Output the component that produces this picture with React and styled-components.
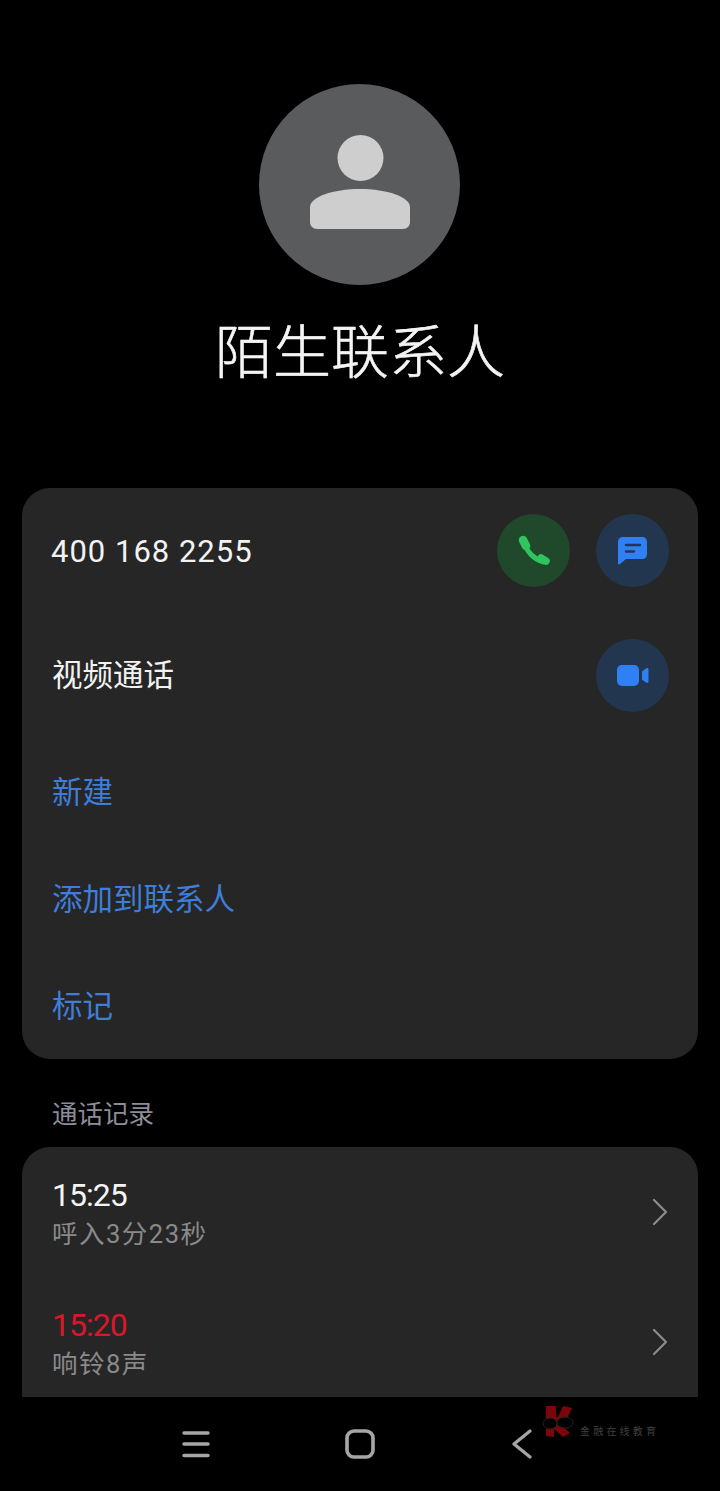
import React from 'react';
import styled, { createGlobalStyle } from 'styled-components';

const GlobalStyle = createGlobalStyle`
    html, body {
        margin: 0;
        padding: 0;
        background: #000;
    }
    body {
        font-family: "Noto Sans CJK SC", Roboto, sans-serif;
    }
`

const Screen = styled.div`
    width: 720px;
    height: 1491px;
    display: flex;
    flex-direction: column;
    background: #000;
    overflow: hidden;
    position: relative;
`

const Content = styled.main`
    flex: 1;
    min-height: 0;
    overflow: hidden;
    padding: 84px 22px 0;
`

const Header = styled.header`
    display: flex;
    flex-direction: column;
    align-items: center;
`

const Avatar = styled.div`
    width: 201px;
    height: 201px;
    margin-left: -1px;
    padding-bottom: 5px;
    box-sizing: border-box;
    border-radius: 50%;
    background: #5a5b5d;
    display: flex;
    align-items: center;
    justify-content: center;
`

const Name = styled.h1`
    margin: 18px 0 0;
    font-size: 58px;
    line-height: 90px;
    font-weight: 300;
    -webkit-text-stroke: 0.6px #f4f4f4;
    color: #f4f4f4;
`

const Card = styled.section`
    background: #262626;
    border-radius: 28px;
    margin-top: ${props => props.$top}px;
    padding-bottom: ${props => props.$bottom || 0}px;
`

const ActionRow = styled.div`
    height: 125px;
    padding: 0 29px 0 30px;
    display: flex;
    align-items: center;
    justify-content: space-between;
`

const PhoneNumber = styled.span`
    margin-left: -1px;
    padding-top: 2px;
    font-family: Roboto, sans-serif;
    font-size: 31px;
    letter-spacing: 1px;
    color: #f2f2f2;
`

const VideoLabel = styled.span`
    padding-bottom: 6px;
    font-size: 30.5px;
    color: #f2f2f2;
`

const RoundButtons = styled.div`
    display: flex;
    gap: 26px;
`

const RoundButton = styled.button`
    width: 73px;
    height: 73px;
    padding: 0;
    border: none;
    border-radius: 50%;
    background: ${props => props.$green ? '#20482b' : '#233650'};
    display: flex;
    align-items: center;
    justify-content: center;
`

const LinkRow = styled.div`
    height: 107px;
    padding: 0 30px 4px;
    box-sizing: border-box;
    display: flex;
    align-items: center;
    font-size: 30.5px;
    color: #3f7ed8;
`

const SectionTitle = styled.h2`
    margin: 35px 0 0 30px;
    font-size: 25.5px;
    line-height: 36px;
    font-weight: 400;
    color: #8b8d98;
`

const CallRow = styled.div`
    height: 130px;
    padding: 0 30px;
    display: flex;
    align-items: center;
    justify-content: space-between;
`

const CallInfo = styled.div`
    padding-top: 3px;
    display: flex;
    flex-direction: column;
`

const CallTime = styled.span`
    font-family: Roboto, sans-serif;
    font-size: 32px;
    line-height: 40px;
    letter-spacing: -1px;
    color: ${props => props.$missed ? '#d8182a' : '#f4f4f4'};
`

const CallDetail = styled.span`
    margin-top: 1px;
    font-family: Roboto, "Noto Sans CJK SC", sans-serif;
    font-size: 25.5px;
    line-height: 36px;
    letter-spacing: 1.5px;
    color: #8a8a8a;
`

const NavBar = styled.nav`
    height: 94px;
    flex: none;
    display: flex;
    align-items: center;
    gap: 135px;
    padding-left: 182px;
    background: #000;
`

const BackSlot = styled.span`
    display: flex;
    margin-left: 2px;
`

const Watermark = styled.div`
    position: absolute;
    left: 540px;
    top: 1403px;
    display: flex;
    align-items: flex-end;
    gap: 4px;
`

const WatermarkText = styled.span`
    font-size: 10px;
    line-height: 14px;
    letter-spacing: 3.2px;
    color: #404040;
    margin-bottom: 1px;
    white-space: nowrap;
`

const PersonIcon = () => (
    <svg width="100" height="94" viewBox="0 0 100 94" fill="#cecece">
        <circle cx="50.500" cy="23" r="23" />
        <path d="M0 72C0 62 23 54 50 54s50 8 50 18v15c0 4-3 7-7 7H7c-4 0-7-3-7-7z" />
    </svg>
)

const PhoneIcon = () => (
    <svg width="34" height="34" viewBox="0 0 34 34" fill="none" stroke="#2fc45d" strokeLinecap="round">
        <path d="M6 6l3 6" strokeWidth="8.500" />
        <path d="M8 10C10 18 17 25 26 28" strokeWidth="5" />
        <path d="M24 24l5 3" strokeWidth="7.500" />
    </svg>
)

const MessageIcon = () => (
    <svg width="30" height="30" viewBox="0 0 30 30">
        <path d="M5 1h19c3 0 5 2 5 5v12c0 3-2 5-5 5H8l-6 5c-1 .8-2 .4-2-1V6c0-3 2-5 5-5z" fill="#2f7ff5" />
        <path d="M8 9h14M8 15.500h8" stroke="#233650" strokeWidth="2.400" strokeLinecap="round" />
    </svg>
)

const VideoIcon = () => (
    <svg width="32" height="22" viewBox="0 0 32 22" fill="#2f7ff5">
        <rect x="0" y="0" width="22" height="21" rx="5" />
        <path d="M25 6.500l4-3c1-.8 2.500-.3 2.500 1v12c0 1.300-1.500 1.800-2.500 1l-4-3z" />
    </svg>
)

const Chevron = () => (
    <svg width="16" height="28" viewBox="0 0 16 28" fill="none" stroke="#8c8c8c" strokeWidth="2.200" strokeLinecap="round" strokeLinejoin="round">
        <path d="M2 2l12 12L2 26" />
    </svg>
)

const MenuGlyph = () => (
    <svg width="28" height="28" viewBox="0 0 28 28" stroke="#a6a6a6" strokeWidth="3.400" strokeLinecap="round">
        <path d="M2 3h24M2 14h24M2 25.500h24" />
    </svg>
)

const HomeGlyph = () => (
    <svg width="30" height="30" viewBox="0 0 30 30" fill="none" stroke="#a6a6a6" strokeWidth="3.600">
        <rect x="2" y="2" width="26" height="26" rx="7" />
    </svg>
)

const BackGlyph = () => (
    <svg width="20" height="30" viewBox="0 0 20 30" fill="none" stroke="#a6a6a6" strokeWidth="3.200" strokeLinecap="round" strokeLinejoin="round">
        <path d="M18 2L2 15l16 13" />
    </svg>
)

const WatermarkLogo = () => (
    <svg width="36" height="36" viewBox="0 0 36 36">
        <path d="M6 3h10v11h2l5-11 9 2-6 13-6 3 10 9-7 4-9-8v8l-8-1z" fill="#7b0508" />
        <ellipse cx="10" cy="20.500" rx="7" ry="5.500" fill="#000" stroke="#242424" strokeWidth="1" />
        <ellipse cx="25" cy="19.500" rx="8" ry="5.500" fill="#000" stroke="#242424" strokeWidth="1" />
    </svg>
)

const App = () => {
    return (
        <Screen>
            <GlobalStyle />
            <Content>
                <Header>
                    <Avatar><PersonIcon /></Avatar>
                    <Name>陌生联系人</Name>
                </Header>
                <Card $top={95}>
                    <ActionRow>
                        <PhoneNumber>400 168 2255</PhoneNumber>
                        <RoundButtons>
                            <RoundButton $green><PhoneIcon /></RoundButton>
                            <RoundButton><MessageIcon /></RoundButton>
                        </RoundButtons>
                    </ActionRow>
                    <ActionRow>
                        <VideoLabel>视频通话</VideoLabel>
                        <RoundButton><VideoIcon /></RoundButton>
                    </ActionRow>
                    <LinkRow>新建</LinkRow>
                    <LinkRow>添加到联系人</LinkRow>
                    <LinkRow>标记</LinkRow>
                </Card>
                <SectionTitle>通话记录</SectionTitle>
                <Card $top={17} $bottom={60}>
                    <CallRow>
                        <CallInfo>
                            <CallTime>15:25</CallTime>
                            <CallDetail>呼入3分23秒</CallDetail>
                        </CallInfo>
                        <Chevron />
                    </CallRow>
                    <CallRow>
                        <CallInfo>
                            <CallTime $missed>15:20</CallTime>
                            <CallDetail>响铃8声</CallDetail>
                        </CallInfo>
                        <Chevron />
                    </CallRow>
                </Card>
            </Content>
            <NavBar>
                <MenuGlyph />
                <HomeGlyph />
                <BackSlot><BackGlyph /></BackSlot>
            </NavBar>
            <Watermark>
                <WatermarkLogo />
                <WatermarkText>金融在线教育</WatermarkText>
            </Watermark>
        </Screen>
    )
}

export default App;
